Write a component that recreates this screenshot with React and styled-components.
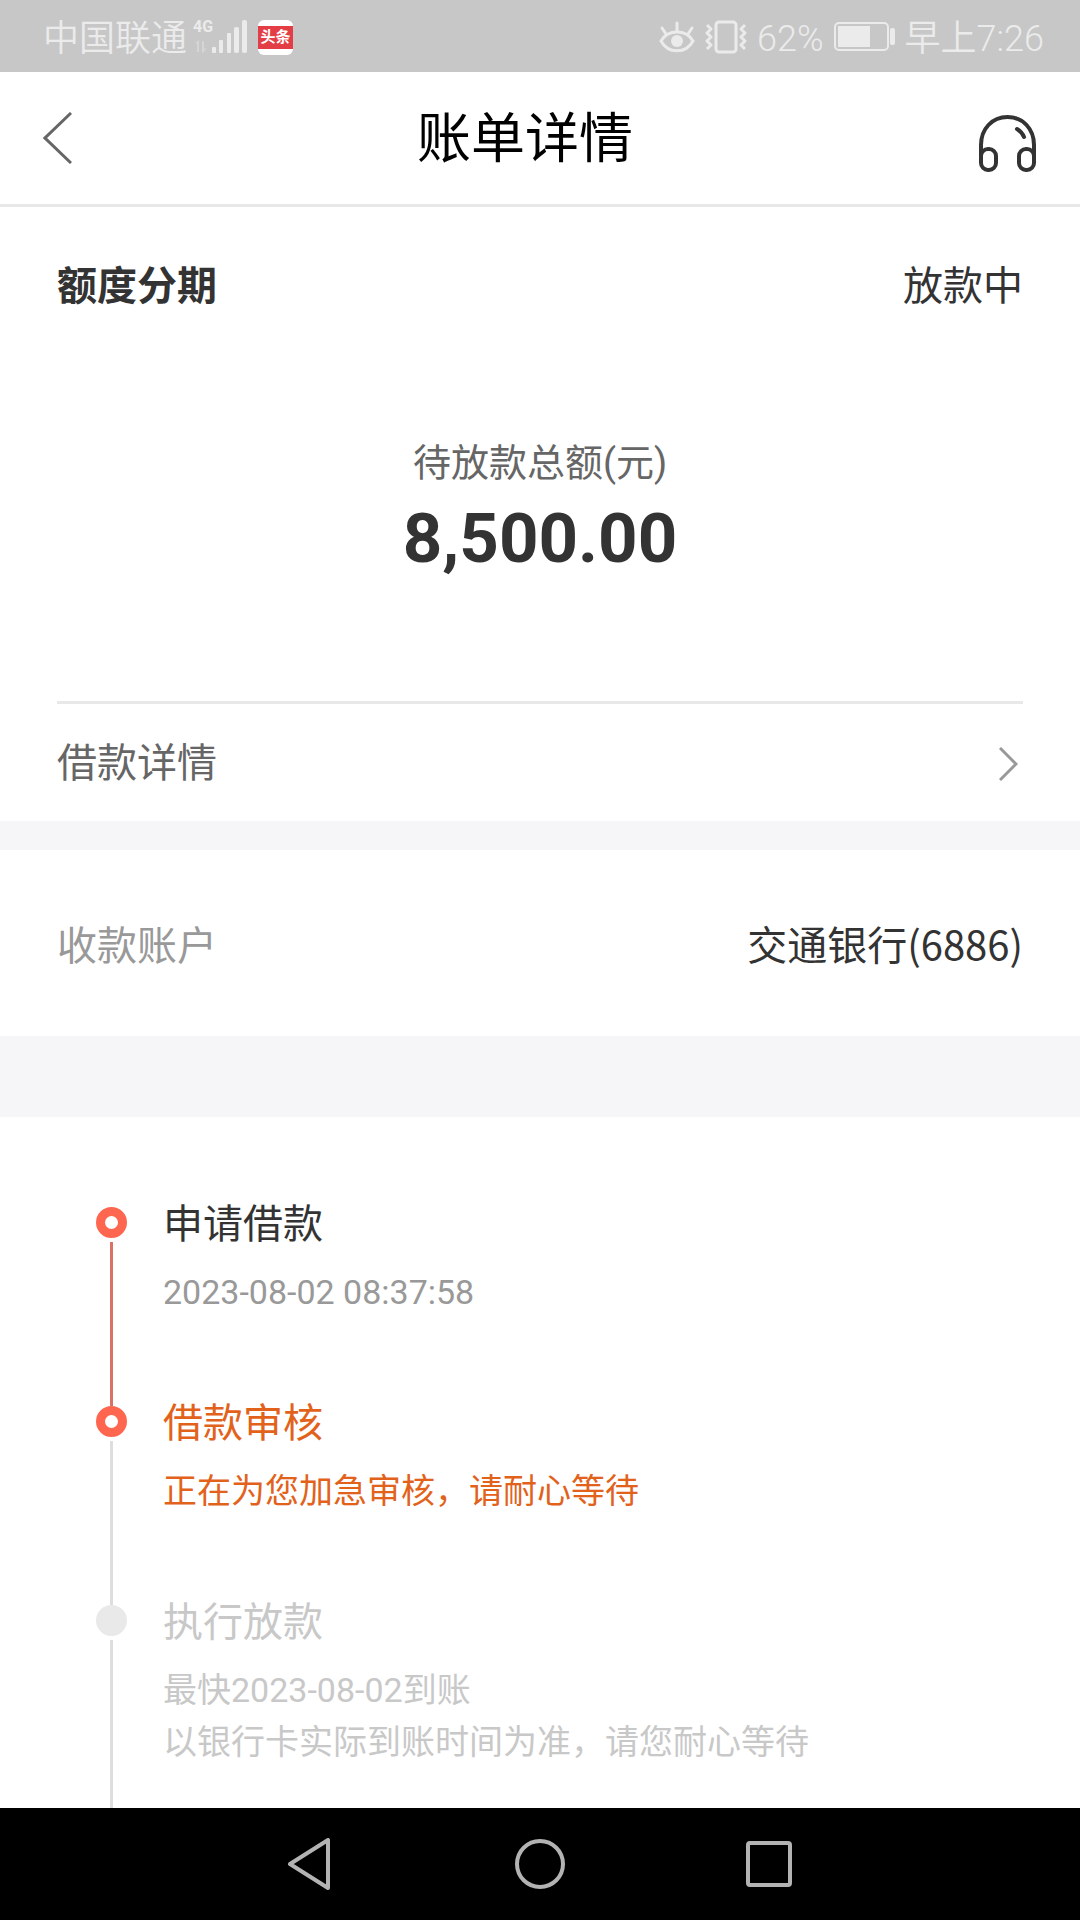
import styled, { createGlobalStyle } from 'styled-components';

const steps = [
  {
    title: '申请借款',
    lines: ['2023-08-02 08:37:58'],
    state: 'done',
  },
  {
    title: '借款审核',
    lines: ['正在为您加急审核，请耐心等待'],
    state: 'active',
  },
  {
    title: '执行放款',
    lines: ['最快2023-08-02到账', '以银行卡实际到账时间为准，请您耐心等待'],
    state: 'pending',
  },
];

const color = {
  text: '#333333',
  textSub: '#666666',
  textMuted: '#999999',
  textPending: '#c8c8c8',
  active: '#e2621b',
  dot: '#ff6650',
  dotPending: '#e9e9e9',
  lineDone: '#da7268',
  line: '#dedede',
  divider: '#e8e8e8',
  band: '#f6f6f8',
  status: '#c7c7c7',
  statusText: '#ebebeb',
};

const titleColor = {
  done: color.text,
  active: color.active,
  pending: color.textPending,
};

const lineColor = {
  done: color.textMuted,
  active: color.active,
  pending: color.textPending,
};

const SignalIcon = () => (
  <svg width="54" height="36" viewBox="0 0 54 36" fill="currentColor" aria-hidden="true">
    <path d="M2 24l4-3v12H4v-8zM9 22h2v8l3-1-4 5-1-1z" opacity="0.4" />
    <rect x="19" y="28" width="4" height="6" rx="1" />
    <rect x="26" y="21" width="4" height="13" rx="1" />
    <rect x="34" y="14" width="4" height="20" rx="1" />
    <rect x="41" y="8" width="5" height="26" rx="2" />
    <rect x="49" y="1" width="5" height="33" rx="2" />
  </svg>
);

const EyeIcon = () => (
  <svg width="36" height="32" viewBox="0 0 36 32" fill="none" aria-hidden="true">
    <g stroke="currentColor" strokeWidth="3" strokeLinecap="round">
      <path d="M2 20C9 8 27 8 34 20C27 33 9 33 2 20Z" />
      <path d="M18 2v8M3 7l4 6M33 7l-4 6" />
    </g>
    <circle cx="18" cy="20" r="6" fill="currentColor" />
  </svg>
);

const VibrateIcon = () => (
  <svg width="42" height="34" viewBox="1 0 42 34" fill="none" stroke="currentColor" aria-hidden="true">
    <rect x="12" y="2" width="20" height="30" rx="3" strokeWidth="3" />
    <path
      d="M3 5l4 4-4 4 4 4-4 4 4 4-4 4M41 5l-4 4 4 4-4 4 4 4-4 4 4 4"
      strokeWidth="3"
      strokeLinejoin="round"
    />
  </svg>
);

const BatteryIcon = () => (
  <svg width="61" height="30" viewBox="0 0 61 30" fill="none" aria-hidden="true">
    <rect x="1" y="1" width="53" height="27" rx="4" stroke="currentColor" strokeWidth="2" />
    <rect x="4" y="4" width="32" height="21" fill="currentColor" />
    <rect x="56" y="6" width="5" height="17" rx="2" fill="currentColor" />
  </svg>
);

const BackIcon = () => (
  <svg width="29" height="52" viewBox="0 0 29 52" fill="none" stroke="#666666" strokeWidth="3" aria-hidden="true">
    <path d="M28 1L2 26L28 51" />
  </svg>
);

const HeadphonesIcon = () => (
  <svg width="59" height="67" viewBox="0 -10 59 67" fill="none" stroke="#333333" strokeWidth="4" aria-hidden="true">
    <path d="M3 46V30C3 14 14 2 29.500 2S56 14 56 30V46" />
    <rect x="3" y="34" width="15" height="21" rx="7" />
    <rect x="41" y="34" width="15" height="21" rx="7" />
    <path d="M39 14Q44 17 46 22" strokeLinecap="round" />
  </svg>
);

const ChevronIcon = () => (
  <svg width="19" height="34" viewBox="0 0 19 34" fill="none" stroke="#999999" strokeWidth="3" aria-hidden="true">
    <path d="M1 1L17 17L1 33" />
  </svg>
);

const StatusBar = () => (
  <Status>
    <StatusGroup $gap={6}>
      <StatusText>中国联通</StatusText>
      <Signal>
        <Network>4G</Network>
        <SignalIcon />
      </Signal>
      <NewsBadge>
        <span>头条</span>
      </NewsBadge>
    </StatusGroup>
    <StatusGroup $gap={10}>
      <EyeIcon />
      <VibrateIcon />
      <StatusText>62%</StatusText>
      <BatteryIcon />
      <StatusText>早上7:26</StatusText>
    </StatusGroup>
  </Status>
);

const Step = ({ step }) => (
  <StepItem>
    <Rail>
      <Dot $pending={step.state === 'pending'} />
      <RailLine $done={step.state === 'done'} />
    </Rail>
    <StepBody>
      <StepTitle $state={step.state}>{step.title}</StepTitle>
      {step.lines.map((line) => (
        <StepLine key={line} $state={step.state}>
          {line}
        </StepLine>
      ))}
    </StepBody>
  </StepItem>
);

const App = () => (
  <>
    <GlobalStyle />
    <Page>
      <StatusBar />
      <Header>
        <IconButton type="button" aria-label="返回">
          <BackIcon />
        </IconButton>
        <Title>账单详情</Title>
        <IconButton type="button" aria-label="客服">
          <HeadphonesIcon />
        </IconButton>
      </Header>
      <Main>
        <Summary>
          <SummaryRow>
            <SummaryTitle>额度分期</SummaryTitle>
            <span>放款中</span>
          </SummaryRow>
          <Total>
            <TotalLabel>待放款总额(元)</TotalLabel>
            <Amount>8,500.00</Amount>
          </Total>
          <DetailLink href="#detail">
            借款详情
            <ChevronIcon />
          </DetailLink>
        </Summary>
        <Account>
          <AccountLabel>收款账户</AccountLabel>
          <AccountValue>交通银行(6886)</AccountValue>
        </Account>
        <Timeline>
          {steps.map((step) => (
            <Step key={step.title} step={step} />
          ))}
        </Timeline>
      </Main>
      <NavBar>
        <IconButton type="button" aria-label="后退">
          <svg width="48" height="52" viewBox="0 0 48 52" fill="none" stroke="#b3b3b3" strokeWidth="4" strokeLinejoin="round">
            <path d="M42 2V50L4 26Z" />
          </svg>
        </IconButton>
        <IconButton type="button" aria-label="主页">
          <svg width="50" height="50" viewBox="0 0 50 50" fill="none" stroke="#b3b3b3" strokeWidth="4">
            <circle cx="25" cy="25" r="23" />
          </svg>
        </IconButton>
        <IconButton type="button" aria-label="最近任务">
          <svg width="46" height="46" viewBox="0 0 46 46" fill="none" stroke="#b3b3b3" strokeWidth="4">
            <rect x="2" y="2" width="42" height="42" rx="2" />
          </svg>
        </IconButton>
      </NavBar>
    </Page>
  </>
);

export default App;

const GlobalStyle = createGlobalStyle`
  * {
    box-sizing: border-box;
  }
  body {
    margin: 0;
    background: #ffffff;
    color: ${color.text};
    font-family: Roboto, 'Noto Sans CJK SC', sans-serif;
    font-size: 40px;
    line-height: 56px;
  }
  h1, h2, h3, p, ol {
    margin: 0;
    padding: 0;
  }
  svg {
    display: block;
    flex-shrink: 0;
  }
`;

const Page = styled.div`
  display: flex;
  flex-direction: column;
  min-height: 100vh;
`;

const Status = styled.div`
  display: flex;
  justify-content: space-between;
  align-items: center;
  height: 72px;
  padding: 2px 36px 0 43px;
  background: ${color.status};
  color: ${color.statusText};
  font-size: 36px;
  font-weight: 350;
`;

const StatusGroup = styled.div`
  display: flex;
  align-items: center;
  gap: ${({ $gap }) => $gap}px;
  white-space: nowrap;
`;

const StatusText = styled.span`
  padding-top: 3px;
`;

const Signal = styled.div`
  position: relative;
`;

const Network = styled.span`
  position: absolute;
  top: -2px;
  left: 0;
  font-size: 16px;
  font-weight: 700;
  line-height: 20px;
`;

const NewsBadge = styled.div`
  display: flex;
  align-items: center;
  width: 35px;
  height: 35px;
  margin-left: 5px;
  border-radius: 6px;
  background: #ffffff;

  span {
    flex: 1;
    background: #e33e45;
    color: #ffffff;
    font-size: 15px;
    font-weight: 700;
    line-height: 23px;
    text-align: center;
  }
`;

const Header = styled.header`
  display: flex;
  align-items: center;
  height: 135px;
  padding: 0 43px;
  border-bottom: 3px solid ${color.divider};
`;

const IconButton = styled.button`
  padding: 0;
  border: 0;
  background: none;
  cursor: pointer;
`;

const Title = styled.h1`
  flex: 1;
  padding-top: 3px;
  color: #000000;
  font-size: 54px;
  font-weight: 400;
  line-height: 72px;
  text-align: center;
`;

const Main = styled.main`
  display: flex;
  flex: 1;
  flex-direction: column;
`;

const Summary = styled.section`
  padding: 52px 57px 0;
`;

const SummaryRow = styled.div`
  display: flex;
  justify-content: space-between;
`;

const SummaryTitle = styled.h2`
  font-size: 40px;
  font-weight: 700;
`;

const Total = styled.div`
  padding: 120px 0 122px;
  text-align: center;
`;

const TotalLabel = styled.p`
  color: ${color.textSub};
  font-size: 38px;
`;

const Amount = styled.p`
  margin-top: 8px;
  font-size: 69px;
  font-weight: 700;
  line-height: 80px;
`;

const DetailLink = styled.a`
  display: flex;
  justify-content: space-between;
  align-items: center;
  height: 120px;
  padding: 2px 5px 0 0;
  border-top: 3px solid ${color.divider};
  color: ${color.textSub};
  text-decoration: none;
`;

const Account = styled.section`
  display: flex;
  justify-content: space-between;
  align-items: baseline;
  min-height: 215px;
  padding: 65px 57px 60px;
  border-top: 29px solid ${color.band};
`;

const AccountLabel = styled.span`
  color: ${color.textMuted};
`;

const AccountValue = styled.span`
  font-family: 'Noto Sans CJK SC', sans-serif;
`;

const Timeline = styled.ol`
  display: flex;
  flex: 1;
  flex-direction: column;
  padding: 90px 57px 0 96px;
  border-top: 81px solid ${color.band};
  list-style: none;
`;

const StepItem = styled.li`
  display: flex;
  gap: 36px;

  &:last-child {
    flex: 1;
  }
`;

const Rail = styled.div`
  display: flex;
  flex-direction: column;
  align-items: center;
  gap: 4px;
`;

const Dot = styled.span`
  width: 31px;
  height: 31px;
  border: 9px solid ${({ $pending }) => ($pending ? color.dotPending : color.dot)};
  border-radius: 50%;
  background: ${({ $pending }) => ($pending ? color.dotPending : '#ffffff')};
`;

const RailLine = styled.span`
  flex: 1;
  width: 3px;
  background: ${({ $done }) => ($done ? color.lineDone : color.line)};
`;

const StepBody = styled.div`
  padding: 2px 0 88px;

  ${StepItem}:last-child & {
    padding-bottom: 38px;
  }
`;

const StepTitle = styled.h3`
  margin-bottom: 25px;
  color: ${({ $state }) => titleColor[$state]};
  font-size: 40px;
  font-weight: 400;
  line-height: 32px;
`;

const StepLine = styled.p`
  color: ${({ $state }) => lineColor[$state]};
  font-size: 34px;
  line-height: 52px;
`;

const NavBar = styled.nav`
  display: flex;
  justify-content: space-between;
  align-items: center;
  height: 112px;
  padding: 0 288px 0 286px;
  background: #000000;
`;
